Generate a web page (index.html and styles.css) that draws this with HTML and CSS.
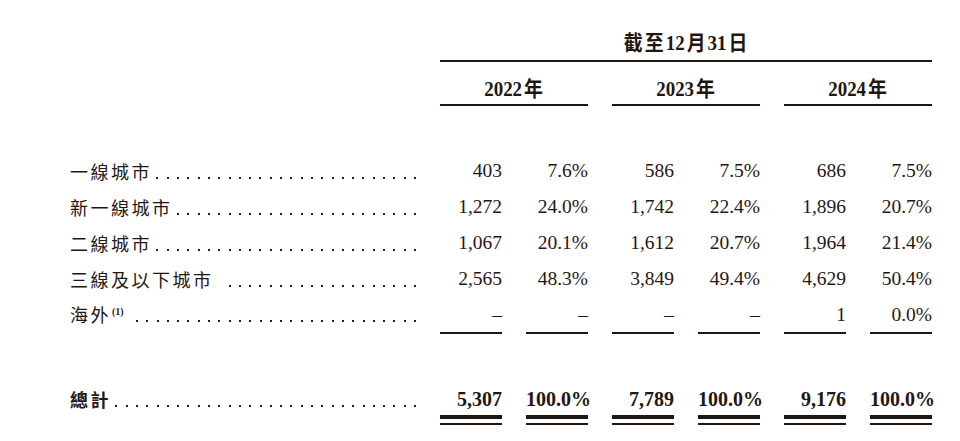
FILE: index.html
```html
<!DOCTYPE html>
<html lang="zh-Hant">
<head>
<meta charset="utf-8">
<title>城市分佈</title>
<link rel="stylesheet" href="styles.css">
</head>
<body>
<div class="table">
  <div class="head-blank"></div>
  <div class="title"><span class="cond">截 至 12 月 31 日</span></div>
  <div class="year y1"><span class="cond">2022 年</span></div>
  <div class="year y2"><span class="cond">2023 年</span></div>
  <div class="year y3"><span class="cond">2024 年</span></div>
  <div class="spacer top"></div>

  <div class="label"><span class="txt">一線城市</span><span class="leader"></span></div>
  <div class="num">403</div><div class="num">7.6%</div>
  <div class="num">586</div><div class="num">7.5%</div>
  <div class="num">686</div><div class="num">7.5%</div>

  <div class="label"><span class="txt">新一線城市</span><span class="leader"></span></div>
  <div class="num">1,272</div><div class="num">24.0%</div>
  <div class="num">1,742</div><div class="num">22.4%</div>
  <div class="num">1,896</div><div class="num">20.7%</div>

  <div class="label"><span class="txt">二線城市</span><span class="leader"></span></div>
  <div class="num">1,067</div><div class="num">20.1%</div>
  <div class="num">1,612</div><div class="num">20.7%</div>
  <div class="num">1,964</div><div class="num">21.4%</div>

  <div class="label"><span class="txt">三線及以下城市</span><span class="leader gap"></span></div>
  <div class="num">2,565</div><div class="num">48.3%</div>
  <div class="num">3,849</div><div class="num">49.4%</div>
  <div class="num">4,629</div><div class="num">50.4%</div>

  <div class="label last"><span class="txt">海外<sup class="note">(1)</sup></span><span class="leader gap"></span></div>
  <div class="num last">–</div><div class="num last">–</div>
  <div class="num last">–</div><div class="num last">–</div>
  <div class="num last">1</div><div class="num last">0.0%</div>

  <div class="spacer mid"></div>

  <div class="label total"><span class="txt">總計</span><span class="leader"></span></div>
  <div class="num total">5,307</div><div class="num total">100.0%</div>
  <div class="num total">7,789</div><div class="num total">100.0%</div>
  <div class="num total">9,176</div><div class="num total">100.0%</div>
</div>
</body>
</html>
```
FILE: styles.css
```css
:root {
  --ink: #1f1714;
}
html, body {
  margin: 0;
  padding: 0;
  background: #fff;
}
body {
  width: 960px;
  height: 441px;
  overflow: hidden;
  color: var(--ink);
  font-family: "Liberation Serif", "Noto Sans CJK TC", serif;
}
.table {
  display: grid;
  grid-template-columns: 346px repeat(6, 62px);
  column-gap: 24px;
  padding-left: 70px;
}
.head-blank {
  grid-column: 1;
  grid-row: 1 / 3;
}
.title {
  grid-column: 2 / 8;
  grid-row: 1;
  text-align: center;
  font-weight: bold;
  font-size: 21px;
  line-height: 24px;
  padding-top: 31px;
  padding-bottom: 5px;
  border-bottom: 2px solid var(--ink);
  word-spacing: -3px;
}
.cond {
  display: inline-block;
  transform: scaleX(0.9);
  white-space: nowrap;
}
.year {
  grid-row: 2;
  text-align: center;
  font-weight: bold;
  font-size: 21px;
  line-height: 24px;
  padding-top: 15px;
  padding-bottom: 3px;
  border-bottom: 2px solid var(--ink);
  word-spacing: -3px;
}
.y1 { grid-column: 2 / 4; }
.y2 { grid-column: 4 / 6; }
.y3 { grid-column: 6 / 8; }
.spacer {
  grid-column: 1 / -1;
}
.spacer.top { height: 47px; }
.spacer.mid { height: 50px; }

.label {
  grid-column: 1;
  display: flex;
  align-items: baseline;
  font-family: "Noto Sans CJK TC", "Liberation Serif", sans-serif;
  font-size: 18px;
  line-height: 36px;
  letter-spacing: 2.5px;
  white-space: nowrap;
}
.leader {
  flex: 1;
  height: 2px;
  margin-left: 0;
  background-image: repeating-linear-gradient(to left, #1f1f1f 0 2px, transparent 2px 10.3px);
}
.leader.gap { margin-left: 7px; }
.note {
  font-family: "Liberation Serif", serif;
  font-weight: bold;
  font-size: 10px;
  letter-spacing: 0;
  vertical-align: 7px;
  line-height: 0;
  margin-left: 1px;
}
.num {
  text-align: right;
  font-size: 19.5px;
  line-height: 36px;
  white-space: nowrap;
}
.num.last {
  line-height: 35px;
  border-bottom: 2px solid var(--ink);
}
.label.last {
  line-height: 35px;
  padding-bottom: 2px;
}
.label.total {
  font-weight: bold;
  line-height: 30px;
  padding-bottom: 11px;
}
.num.total {
  font-weight: bold;
  font-size: 20px;
  line-height: 30px;
  padding-bottom: 11px;
  background-image:
    linear-gradient(var(--ink), var(--ink)),
    linear-gradient(var(--ink), var(--ink));
  background-repeat: no-repeat;
  background-size: 100% 2px, 100% 4px;
  background-position: 0 100%, 0 calc(100% - 6px);
}
```
